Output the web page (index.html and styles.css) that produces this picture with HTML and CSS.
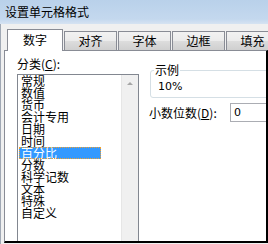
FILE: index.html
```html
<!DOCTYPE html>
<html lang="zh-CN">
<head>
  <meta charset="UTF-8">
  <title>设置单元格格式</title>
  <link rel="stylesheet" href="styles.css">
</head>
<body>
  <div class="window">
    <div class="titlebar">设置单元格格式</div>
    <div class="frame">
      <div class="tabs">
        <div class="tab active">数字</div>
        <div class="tab">对齐</div>
        <div class="tab">字体</div>
        <div class="tab">边框</div>
        <div class="tab">填充</div>
      </div>
      <div class="panel">
        <div class="left">
          <div class="label">分类(<u>C</u>):</div>
          <div class="listbox">
            <ul class="items">
              <li>常规</li>
              <li>数值</li>
              <li>货币</li>
              <li>会计专用</li>
              <li>日期</li>
              <li>时间</li>
              <li class="selected">百分比</li>
              <li>分数</li>
              <li>科学记数</li>
              <li>文本</li>
              <li>特殊</li>
              <li>自定义</li>
            </ul>
            <div class="scrollbar"><span class="arrow"></span></div>
          </div>
        </div>
        <div class="right">
          <div class="sample">
            <span class="legend">示例</span>
            <div class="sample-value">10%</div>
          </div>
          <div class="decimals">
            <span class="dec-label">小数位数(<u>D</u>):</span>
            <div class="input">0</div>
          </div>
        </div>
      </div>
    </div>
  </div>
</body>
</html>
```

FILE: styles.css
```css
* { box-sizing: border-box; }
body {
  margin: 0;
  width: 268px;
  height: 244px;
  overflow: hidden;
  background: #fff;
  font-family: "Noto Sans CJK SC", "DejaVu Sans", sans-serif;
  font-size: 12px;
  color: #000;
}
.window {
  width: 268px;
  height: 244px;
  overflow: hidden;
}
.titlebar {
  height: 24px;
  padding-left: 5px;
  line-height: 24px;
  background: linear-gradient(#b9d1ea, #c4d8ee 80%, #d6e3f2);
}
.frame {
  height: 220px;
  background: #f0f0f0;
  border-left: 1px solid #a0a8b4;
  padding: 5px 0 0 3px;
  overflow: hidden;
}
.tabs {
  display: flex;
  align-items: flex-end;
  height: 21px;
  padding-left: 3px;
}
.tab {
  flex-shrink: 0;
  width: 53px;
  height: 19px;
  margin-left: 1px;
  text-align: center;
  line-height: 18px;
  border: 1px solid #898c95;
  border-bottom: none;
  background: linear-gradient(#f2f2f2, #ebebeb 50%, #dddddd 51%, #cfcfcf);
}
.tab.active {
  width: 56px;
  height: 22px;
  margin: 0 0 -1px 0;
  line-height: 20px;
  background: #fff;
  position: relative;
  z-index: 1;
}
.panel {
  display: flex;
  height: 193px;
  width: 264px;
  background: #fff;
  border: 1px solid #898c95;
  border-right: 2px solid #000;
  border-bottom: 2px solid #000;
  overflow: hidden;
}
.left {
  flex-shrink: 0;
  padding: 6px 0 0 12px;
}
.label {
  height: 17px;
  line-height: 14px;
}
.label u, .dec-label u { text-decoration: underline; }
.listbox {
  display: flex;
  width: 122px;
  height: 200px;
  border: 1px solid #828790;
  border-bottom: none;
}
.items {
  list-style: none;
  margin: 0;
  padding: 0 0 0 1px;
  flex: 1;
}
.items li {
  width: 82px;
  height: 12px;
  line-height: 12px;
  padding-left: 2px;
  white-space: nowrap;
}
.items li.selected {
  background: #3399ff;
  color: #fff;
  outline: 1px dotted #f0a030;
  outline-offset: -1px;
}
.scrollbar {
  width: 17px;
  background: #f0f0f0;
  border-left: 1px solid #e6e6e6;
  display: flex;
  justify-content: center;
  padding-top: 7px;
}
.arrow {
  width: 0;
  height: 0;
  border-left: 3px solid transparent;
  border-right: 3px solid transparent;
  border-bottom: 3px solid #a6a6a6;
}
.right {
  flex: 1;
  min-width: 0;
  padding: 19px 0 0 10px;
}
.sample {
  position: relative;
  height: 28px;
  margin-left: 1px;
  width: 160px;
  border: 1px solid #d5dfe5;
  border-radius: 3px;
}
.legend {
  position: absolute;
  top: -7px;
  left: 3px;
  padding: 0 1px;
  line-height: 12px;
  background: #fff;
}
.sample-value {
  padding: 9px 0 0 7px;
  line-height: 14px;
  font-family: "DejaVu Sans", sans-serif;
  font-size: 11px;
}
.decimals {
  display: flex;
  align-items: center;
  margin-top: 5px;
  white-space: nowrap;
}
.dec-label {
  flex-shrink: 0;
  width: 81px;
}
.input {
  flex-shrink: 0;
  width: 60px;
  height: 19px;
  border: 1px solid #abadb3;
  padding-left: 3px;
  line-height: 17px;
  font-family: "DejaVu Sans", sans-serif;
  font-size: 11px;
}
```
